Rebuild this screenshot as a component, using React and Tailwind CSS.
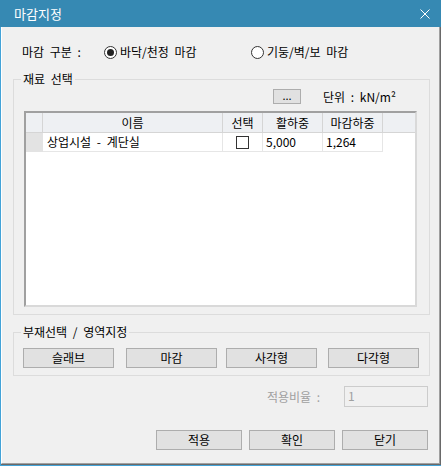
import React from 'react';

const Btn = ({ className = '', children }) => (
    <button className={`h-[20px] bg-[#e1e1e1] border border-[#adadad] text-[12px] leading-none text-black flex items-center justify-center ${className}`}>
        {children}
    </button>
);

const Radio = ({ checked }) => (
    <span className="w-[13px] h-[13px] rounded-full border border-[#333] bg-white flex items-center justify-center shrink-0">
        {checked && <span className="w-[7px] h-[7px] rounded-full bg-[#222]"></span>}
    </span>
);

const App = () => {
    return (
        <div className="w-[441px] h-[466px] bg-[#3689b3] flex flex-col font-[family-name:'Noto_Sans_CJK_KR',sans-serif] text-black select-none [word-spacing:3px]">
            {/* Title bar */}
            <div className="h-[27px] flex items-center justify-between pl-[14px] pr-[11px] shrink-0">
                <span className="text-white text-[13px] leading-none">마감지정</span>
                <svg width="10" height="10" viewBox="0 0 10 10">
                    <path d="M0.5 0.5 L9.5 9.5 M9.5 0.5 L0.5 9.5" stroke="#fff" strokeWidth="1" fill="none" />
                </svg>
            </div>

            {/* Client area */}
            <div className="flex-1 bg-[#43a3d8] pl-[1px] pb-[1px]">
                <div className="h-full border-r border-b border-[#696969]">
                    <div className="h-full bg-[#f0f0f0] border-l border-[#fff] border-r border-b border-r-[#a0a0a0] border-b-[#a0a0a0] flex flex-col">
                        {/* Finish type */}
                        <div className="h-[16px] mt-[17px] flex items-center text-[12px] leading-none">
                            <span className="ml-[20px] w-[82px]">마감 구분 :</span>
                            <span className="w-[147px] flex items-center gap-[3px]">
                                <Radio checked />
                                <span>바닥/천정 마감</span>
                            </span>
                            <span className="flex items-center gap-[3px]">
                                <Radio />
                                <span>기둥/벽/보 마감</span>
                            </span>
                        </div>

                        {/* Material group */}
                        <fieldset className="ml-[11px] w-[417px] mt-[12px] border border-[#dcdcdc] pb-[7px]">
                            <legend className="ml-[7px] px-[2px] text-[12px] leading-[14px]">재료 선택</legend>
                            <div className="flex items-center h-[15px] mt-[3px]">
                                <button className="ml-[259px] w-[28px] h-[15px] bg-[#e1e1e1] border border-[#adadad] text-[11px] leading-none flex items-end justify-center pb-[2px]">...</button>
                                <span className="ml-[22px] text-[12px] leading-none">단위 : kN/m²</span>
                            </div>
                            <div className="ml-[10px] mt-[7px] w-[393px] h-[196px] bg-white border-2 border-t-[#a0a0a0] border-l-[#a0a0a0] border-r-[#d9d9d9] border-b-[#d9d9d9] text-[12px] leading-none">
                                <div className="flex h-[20px] bg-[#eef0f3] border-b border-[#d5d5d5]">
                                    <div className="w-[17px] border-r border-[#d5d5d5]"></div>
                                    <div className="w-[180px] border-r border-[#d5d5d5] flex items-center justify-center">이름</div>
                                    <div className="w-[40px] border-r border-[#d5d5d5] flex items-center justify-center">선택</div>
                                    <div className="w-[60px] border-r border-[#d5d5d5] flex items-center justify-center">활하중</div>
                                    <div className="w-[60px] border-r border-[#d5d5d5] flex items-center justify-center">마감하중</div>
                                    <div className="flex-1"></div>
                                </div>
                                <div className="flex h-[19px]">
                                    <div className="w-[17px] bg-[#e3e3e3] border-b border-[#e3e3e3]"></div>
                                    <div className="w-[180px] border-r border-b border-[#e6e6e6] flex items-center pl-[4px]">상업시설 - 계단실</div>
                                    <div className="w-[40px] border-r border-b border-[#e6e6e6] flex items-center justify-center">
                                        <span className="w-[13px] h-[13px] border border-[#333] bg-white"></span>
                                    </div>
                                    <div className="w-[60px] border-r border-b border-[#e6e6e6] flex items-center pl-[3px]">5,000</div>
                                    <div className="w-[60px] border-r border-b border-[#e6e6e6] flex items-center pl-[3px]">1,264</div>
                                </div>
                            </div>
                        </fieldset>

                        {/* Member selection group */}
                        <fieldset className="ml-[11px] w-[417px] mt-[10px] border border-[#dcdcdc] pb-[7px]">
                            <legend className="ml-[7px] px-[2px] text-[12px] leading-[14px]">부재선택 / 영역지정</legend>
                            <div className="ml-[9px] mt-[9px] flex">
                                <Btn className="w-[91px]">슬래브</Btn>
                                <Btn className="w-[91px] ml-[12px]">마감</Btn>
                                <Btn className="w-[91px] ml-[9px]">사각형</Btn>
                                <Btn className="w-[91px] ml-[11px]">다각형</Btn>
                            </div>
                        </fieldset>

                        {/* Apply ratio */}
                        <div className="mt-[10px] h-[21px] flex items-center">
                            <span className="ml-[265px] text-[12px] leading-none text-[#a0a0a0]">적용비율 :</span>
                            <div className="ml-auto mr-[11px] w-[84px] h-[21px] bg-[#f0f0f0] border border-[#cccccc] text-[12px] leading-none text-[#a0a0a0] pl-[3px] pt-[3px]">1</div>
                        </div>

                        {/* Bottom buttons */}
                        <div className="mt-[23px] flex justify-end pr-[11px] gap-[7px]">
                            <Btn className="w-[86px]">적용</Btn>
                            <Btn className="w-[86px]">확인</Btn>
                            <Btn className="w-[86px]">닫기</Btn>
                        </div>
                    </div>
                </div>
            </div>
        </div>
    );
};

export default App;
